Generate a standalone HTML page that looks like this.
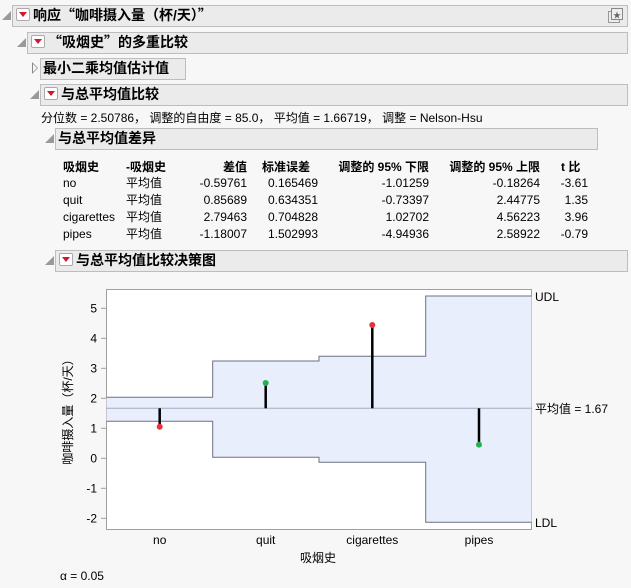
<!DOCTYPE html>
<html><head><meta charset="utf-8"><style>
body{margin:0;width:631px;height:588px;background:#f7f7f7;font-family:"Liberation Sans","Noto Sans CJK SC",sans-serif;position:relative;overflow:hidden;color:#000}
.a{position:absolute;white-space:nowrap}
.h{position:absolute;background:#ebebeb;border:1px solid #bdbdbd;box-sizing:border-box;font-weight:bold;font-size:14px;line-height:19px}
.tri{position:absolute;width:0;height:0;border-left:9px solid transparent;border-bottom:9px solid #999}
.dd{display:inline-block;width:12px;height:11px;border:1px solid #aaa;border-radius:2px;background:#fff;vertical-align:-1px;margin:0 3px 0 3px;position:relative}
.dd:after{content:"";position:absolute;left:2px;top:3px;border-left:4px solid transparent;border-right:4px solid transparent;border-top:5px solid #d0192a}
.t{font-size:12px}
.r{text-align:right}
.q{font-family:"Noto Sans CJK SC",sans-serif}
</style></head><body>
<div class="tri" style="left:2px;top:11px"></div>
<div class="h" style="left:12px;top:5px;width:616px;height:22px"><span class="dd"></span>响应<span class="q">“</span>咖啡摄入量（杯/天）<span class="q">”</span>
<svg style="position:absolute;right:4px;top:2px" width="15" height="15"><rect x="0.5" y="3.5" width="11" height="11" fill="none" stroke="#999"/><rect x="3.5" y="0.5" width="11" height="11" fill="#eee" stroke="#888"/><text x="9" y="10" font-size="8" text-anchor="middle" fill="#666">★</text></svg></div>
<div class="tri" style="left:17px;top:38px"></div>
<div class="h" style="left:27px;top:32px;width:601px;height:22px"><span class="dd"></span><span class="q">“</span>吸烟史<span class="q">”</span>的多重比较</div>
<div class="a" style="left:32px;top:62px;width:0;height:0;border-top:6px solid transparent;border-bottom:6px solid transparent;border-left:6px solid #888"></div>
<div class="a" style="left:33px;top:64px;width:0;height:0;border-top:4px solid transparent;border-bottom:4px solid transparent;border-left:4px solid #f7f7f7"></div>
<div class="h" style="left:40px;top:58px;width:146px;height:22px;padding-left:2px">最小二乘均值估计值</div>
<div class="tri" style="left:30px;top:90px"></div>
<div class="h" style="left:40px;top:84px;width:588px;height:22px"><span class="dd"></span>与总平均值比较</div>
<div class="a t" style="left:41px;top:109px">分位数 = 2.50786， 调整的自由度 = 85.0， 平均值 = 1.66719， 调整 = Nelson-Hsu</div>
<div class="tri" style="left:45px;top:134px"></div>
<div class="h" style="left:55px;top:128px;width:543px;height:22px;padding-left:2px">与总平均值差异</div>
<div class="a t" style="left:0;top:158px;font-weight:bold">
<span class="a" style="left:63px">吸烟史</span><span class="a" style="left:126px">-吸烟史</span><span class="a r" style="left:200px;width:47px">差值</span><span class="a" style="left:262px">标准误差</span><span class="a r" style="left:329px;width:100px">调整的 95% 下限</span><span class="a r" style="left:430px;width:110px">调整的 95% 上限</span><span class="a" style="left:561px">t 比</span></div>
<div class="t a" style="left:0;top:175px;line-height:17px;width:631px">
<div class="a" style="left:63px">no<br>quit<br>cigarettes<br>pipes</div>
<div class="a" style="left:126px">平均值<br>平均值<br>平均值<br>平均值</div>
<div class="a r" style="left:180px;width:67px">-0.59761<br>0.85689<br>2.79463<br>-1.18007</div>
<div class="a r" style="left:250px;width:68px">0.165469<br>0.634351<br>0.704828<br>1.502993</div>
<div class="a r" style="left:340px;width:89px">-1.01259<br>-0.73397<br>1.02702<br>-4.94936</div>
<div class="a r" style="left:450px;width:90px">-0.18264<br>2.44775<br>4.56223<br>2.58922</div>
<div class="a r" style="left:550px;width:38px">-3.61<br>1.35<br>3.96<br>-0.79</div>
</div>
<div class="tri" style="left:45px;top:256px"></div>
<div class="h" style="left:55px;top:250px;width:573px;height:22px"><span class="dd"></span>与总平均值比较决策图</div>
<svg class="a" style="left:0;top:0" width="631" height="588" font-family="Liberation Sans,Noto Sans CJK SC,sans-serif" font-size="12">
<rect x="106.5" y="289.5" width="425" height="240" fill="#fff" stroke="#a0a0a0"/>
<path d="M106.5 397.3H212.7V361H319V356.3H425.7V296H531.5V522.3H425.7V462.3H319V457.3H212.7V421.3H106.5Z" fill="#e8eefc"/>
<path d="M106.5 397.3H212.7V361H319V356.3H425.7V296H531.5M106.5 421.3H212.7V457.3H319V462.3H425.7V522.3H531.5" fill="none" stroke="#6e7080"/>
<line x1="106.5" y1="408.3" x2="531.5" y2="408.3" stroke="#a5abbb"/>
<g stroke="#000" stroke-width="2.5"><line x1="159.7" y1="408.3" x2="159.7" y2="426.7"/><line x1="265.7" y1="408.3" x2="265.7" y2="383"/><line x1="372.3" y1="408.3" x2="372.3" y2="325"/><line x1="479" y1="408.3" x2="479" y2="444.6"/></g>
<circle cx="159.7" cy="426.7" r="3" fill="#e8303f"/><circle cx="265.7" cy="383" r="3" fill="#22b14c"/><circle cx="372.3" cy="325" r="3" fill="#e8303f"/><circle cx="479" cy="444.6" r="3" fill="#22b14c"/>
<g stroke="#a0a0a0"><line x1="101" y1="308.3" x2="106" y2="308.3"/><line x1="101" y1="338.3" x2="106" y2="338.3"/><line x1="101" y1="368.3" x2="106" y2="368.3"/><line x1="101" y1="398.3" x2="106" y2="398.3"/><line x1="101" y1="428.3" x2="106" y2="428.3"/><line x1="101" y1="458.3" x2="106" y2="458.3"/><line x1="101" y1="488.3" x2="106" y2="488.3"/><line x1="101" y1="518.3" x2="106" y2="518.3"/></g>
<g text-anchor="end"><text x="97" y="312.5">5</text><text x="97" y="342.5">4</text><text x="97" y="372.5">3</text><text x="97" y="402.5">2</text><text x="97" y="432.5">1</text><text x="97" y="462.5">0</text><text x="97" y="492.5">-1</text><text x="97" y="522.5">-2</text></g>
<g text-anchor="middle"><text x="159.7" y="544">no</text><text x="265.7" y="544">quit</text><text x="372.3" y="544">cigarettes</text><text x="479" y="544">pipes</text><text x="318" y="562">吸烟史</text></g>
<text x="535" y="301">UDL</text><text x="535" y="413">平均值 = 1.67</text><text x="535" y="527">LDL</text>
<text transform="translate(72,409) rotate(-90)" text-anchor="middle">咖啡摄入量（杯/天）</text>
<text x="60" y="580">α = 0.05</text>
</svg>
</body></html>
